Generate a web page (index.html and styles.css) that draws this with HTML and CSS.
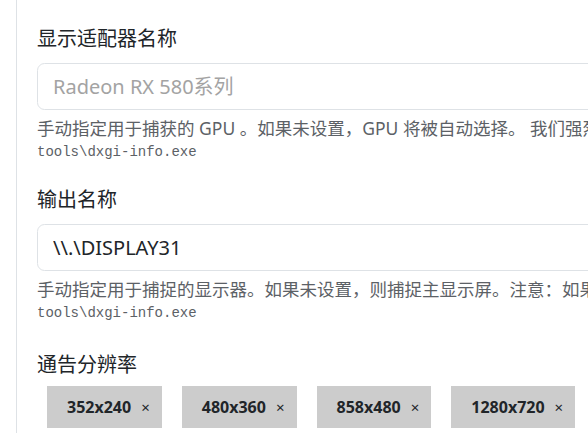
FILE: index.html
```html
<!DOCTYPE html>
<html>
<head>
    <meta charset="utf-8">
    <meta name="viewport" content="width=device-width, initial-scale=1">
    <title>Sunshine 配置</title>
<link rel="stylesheet" href="styles.css">
</head>
<body>
<div class="layout">
    <div class="sidebar"></div>

    <div class="content">
        <div class="field">
            <label class="field-label" for="adapter_name">显示适配器名称</label>
            <input type="text" id="adapter_name" class="form-input" placeholder="Radeon RX 580系列">
            <div class="help">
                手动指定用于捕获的 GPU 。如果未设置，GPU 将被自动选择。 我们强烈建议将此字段留空以使用自动 GPU 选择！注意：此 GPU 必须连接显示器并已开启。可以使用以下命令找到适当的值：
                <code>tools\dxgi-info.exe</code>
            </div>
        </div>

        <div class="field field-2">
            <label class="field-label" for="output_name">输出名称</label>
            <input type="text" id="output_name" class="form-input" value="\\.\DISPLAY31">
            <div class="help">
                手动指定用于捕捉的显示器。如果未设置，则捕捉主显示屏。注意：如果您在上面指定了 GPU，这个显示器必须连接到该 GPU。可以使用以下命令找到适当的值：
                <code>tools\dxgi-info.exe</code>
            </div>
        </div>

        <div class="field">
            <label class="field-label">通告分辨率</label>
            <div class="chips">
                <span class="chip">352x240 <span class="chip-x">×</span></span>
                <span class="chip">480x360 <span class="chip-x">×</span></span>
                <span class="chip">858x480 <span class="chip-x">×</span></span>
                <span class="chip">1280x720 <span class="chip-x">×</span></span>
                <span class="chip">1920x1080 <span class="chip-x">×</span></span>
            </div>
        </div>
    </div>
</div>
</body>
</html>
```

FILE: styles.css
```css
*
{
  margin: 0;
  padding: 0;
  box-sizing: border-box;
}

body
{
  font-family: "Noto Sans", "Noto Sans CJK SC", sans-serif;
  font-size: 20px;
  color: #212529;
  background: #fff;
  overflow: hidden;
}

div.layout
{
  display: flex;
  width: 1400px;
  height: 433px;
}

div.sidebar
{
  flex: none;
  width: 17px;
  border-right: 1px solid #dee2e6;
}

div.content
{
  flex: 1;
  padding: 24px 20px 0 20px;
}

div.field
{
  margin-bottom: 22px;
}

div.field-2
{
  margin-bottom: 26px;
}

.field-label
{
  display: block;
  line-height: 30px;
  margin-bottom: 9px;
}

.form-input
{
  display: block;
  width: 100%;
  height: 47px;
  padding: 0 15px;
  border: 1px solid #dee2e6;
  border-radius: 7.5px;
  font-family: inherit;
  font-size: 20px;
  color: #212529;
  background: #fff;
  outline: none;
}

.form-input::placeholder
{
  color: #a3a3a3;
}

div.help
{
  margin-top: 5px;
  font-size: 17.5px;
  line-height: 26px;
  color: #5c6166;
  white-space: nowrap;
}

div.help code
{
  display: block;
  font-family: "Liberation Mono", monospace;
  font-size: 14px;
  line-height: 22px;
  color: #5c6166;
}

div.chips
{
  display: flex;
  gap: 20px;
  padding-left: 10px;
  margin-top: -3px;
}

span.chip
{
  display: flex;
  align-items: center;
  gap: 10px;
  height: 42px;
  padding: 0 12px 0 20px;
  background: #cccccc;
  font-size: 16px;
  font-weight: bold;
  color: #212529;
  white-space: nowrap;
}

span.chip-x
{
  font-size: 15px;
  font-weight: normal;
}
```
